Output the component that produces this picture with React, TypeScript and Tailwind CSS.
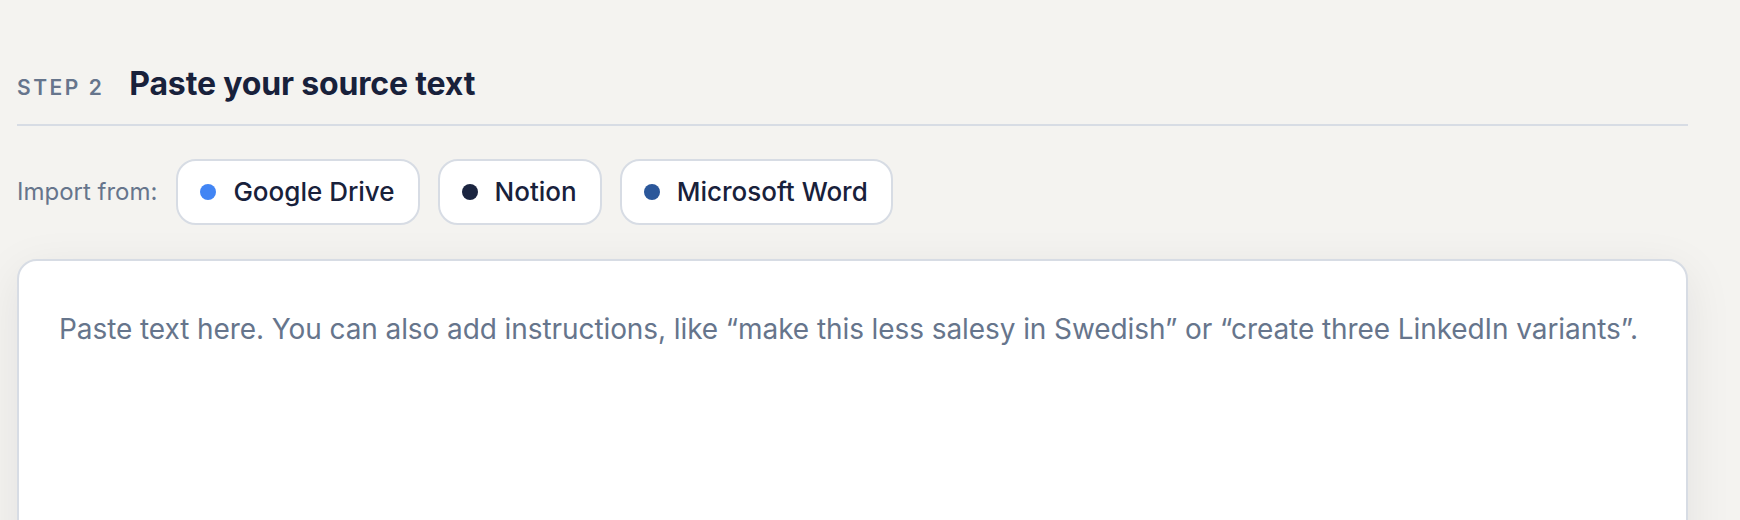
import { useState } from "react";

const sources = [
  { name: "Google Drive", dot: "bg-[#4285f4]" },
  { name: "Notion", dot: "bg-[#1b2540]" },
  { name: "Microsoft Word", dot: "bg-[#2b579a]" },
];

export default function App() {
  const [text, setText] = useState("");

  return (
    <div className="min-h-[520px] w-full bg-[#f4f3f0] font-['Inter',sans-serif] overflow-hidden">
      <div className="w-[1671px] ml-[17px] pt-[64px]">
        {/* Step header */}
        <div className="flex items-baseline gap-[25px] border-b-2 border-[#d7dce4] pb-[20px]">
          <span className="text-[21px] font-semibold tracking-[0.12em] text-[#66758c]">
            STEP 2
          </span>
          <h2 className="text-[32px] leading-[40px] font-bold tracking-[-0.005em] text-[#18213b]">
            Paste your source text
          </h2>
        </div>

        {/* Import row */}
        <div className="flex items-center gap-[18px] mt-[33px]">
          <span className="text-[24px] text-[#66758c] mr-[1px]">Import from:</span>
          {sources.map((s) => (
            <button
              key={s.name}
              className="flex items-center gap-[17px] h-[66px] pl-[22px] pr-[23px] rounded-[20px] border-2 border-[#d7dce4] bg-white text-[26px] leading-[34px] font-medium text-[#18213b]"
            >
              <span className={`w-[16px] h-[16px] rounded-full ${s.dot}`} />
              {s.name}
            </button>
          ))}
        </div>

        {/* Text area */}
        <div className="mt-[34px] h-[400px] rounded-[20px] border-2 border-[#d7dce4] bg-white shadow-[0_12px_48px_rgba(15,23,42,0.08)]">
          <textarea
            value={text}
            onChange={(e) => setText(e.target.value)}
            placeholder="Paste text here. You can also add instructions, like “make this less salesy in Swedish” or “create three LinkedIn variants”."
            className="w-full h-full resize-none bg-transparent outline-none pt-[47px] pl-[40px] pr-[20px] text-[28px] leading-[42px] tracking-[-0.003em] text-[#18213b] placeholder:text-[#66758c]"
          />
        </div>
      </div>
    </div>
  );
}
